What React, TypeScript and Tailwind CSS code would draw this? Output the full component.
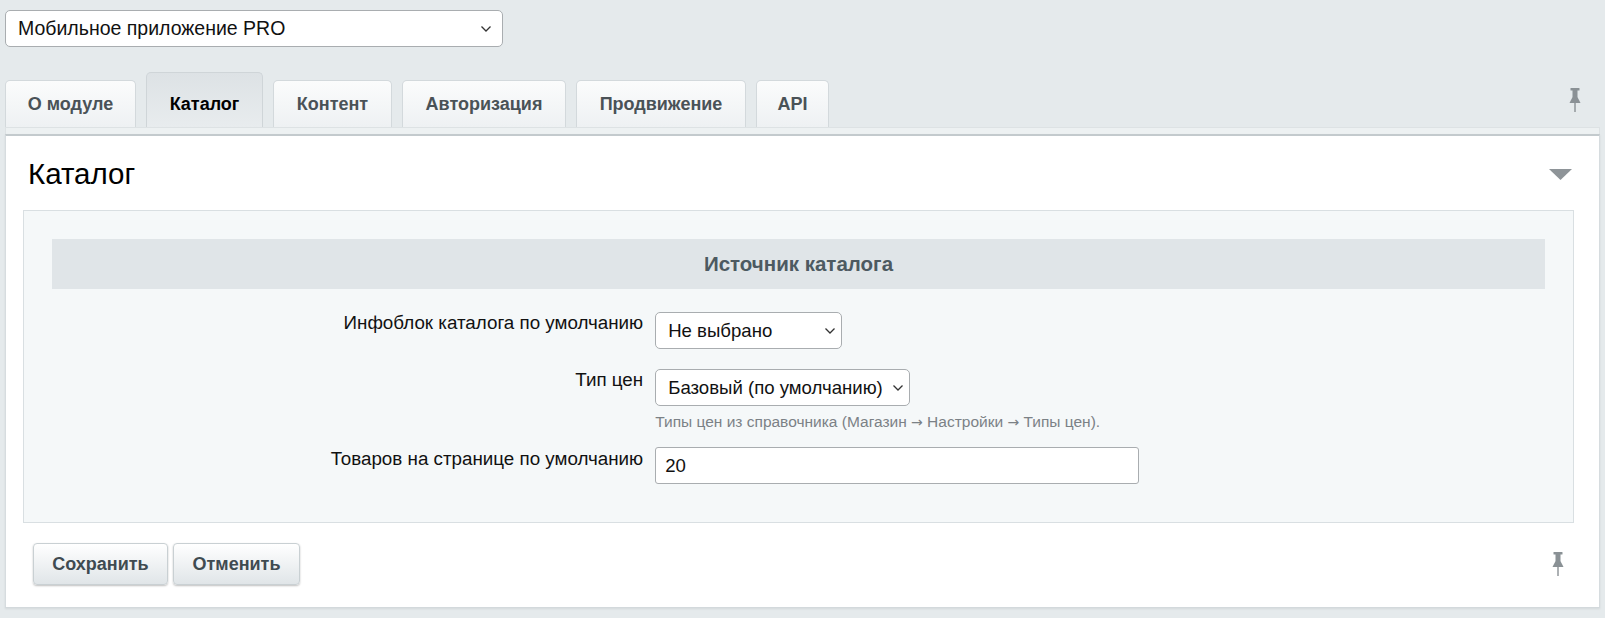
import React from 'react';

const tabs = [
    { label: 'О модуле', w: 'w-[131px]' },
    { label: 'Каталог', w: 'w-[117px]', active: true },
    { label: 'Контент', w: 'w-[119px]' },
    { label: 'Авторизация', w: 'w-[164px]' },
    { label: 'Продвижение', w: 'w-[170px]' },
    { label: 'API', w: 'w-[73px]' },
];

function Chevron({ pos }: { pos: string }) {
    return (
        <svg width="12" height="8" viewBox="0 0 12 8" className={`pointer-events-none absolute ${pos} top-1/2 -translate-y-1/2`}>
            <polyline points="1.5,1.5 6,6 10.5,1.5" fill="none" stroke="#333" strokeWidth="1.3" />
        </svg>
    );
}

function Pin() {
    return (
        <svg width="14" height="24" viewBox="0 0 14 24">
            <rect x="2.5" y="0" width="9" height="2.6" rx="0.6" fill="#8a9195" />
            <rect x="4.5" y="2" width="5" height="8" fill="#8a9195" />
            <polygon points="1.5,15 4.3,9.5 9.7,9.5 12.5,15" fill="#8a9195" />
            <rect x="6.3" y="14.5" width="1.4" height="9.5" fill="#8a9195" />
        </svg>
    );
}

function SelectBox({ value, w }: { value: string; w: string }) {
    return (
        <div className={`relative ${w} h-[37px] rounded-[5px] border border-[#a9adb0] bg-white flex items-center pl-[12px] text-[18.6px] text-[#111]`}>
            <span>{value}</span>
            <Chevron pos="right-[5px]" />
        </div>
    );
}

const Arrow = () => <span style={{ fontFamily: '"DejaVu Sans", sans-serif' }} className="text-[14px]">→</span>;

export default function App() {
    return (
        <div className="min-h-screen bg-[#e5eaec] px-[5px] pt-[10px] pb-[12px] text-[#000]" style={{ fontFamily: '"Liberation Sans", Arial, sans-serif' }}>
            {/* Module select */}
            <div className="relative w-[498px] h-[37px] rounded-[5px] border border-[#a9adb0] bg-white flex items-center pl-[12px] text-[19.5px] text-[#111]">
                <span>Мобильное приложение PRO</span>
                <Chevron pos="right-[10px]" />
            </div>

            {/* Tabs */}
            <div className="mt-[25px] flex items-end justify-between h-[55px]">
                <div className="flex items-end gap-[10px]">
                    {tabs.map((t) =>
                        t.active ? (
                            <div
                                key={t.label}
                                className={`${t.w} h-[55px] rounded-t-[5px] border border-b-0 border-[#cfd5d8] bg-gradient-to-b from-[#dde2e5] to-[#e8ecee] flex items-center justify-center pt-[8px] text-[18px] font-bold text-black`}
                            >
                                {t.label}
                            </div>
                        ) : (
                            <div
                                key={t.label}
                                className={`${t.w} h-[47px] rounded-t-[5px] border border-b-0 border-[#d3d9dc] bg-gradient-to-b from-[#fbfcfc] to-[#eef1f3] flex items-center justify-center text-[18px] font-bold text-[#4a5257]`}
                            >
                                {t.label}
                            </div>
                        )
                    )}
                </div>
                <div className="mr-[18px] mb-[15px]">
                    <Pin />
                </div>
            </div>

            {/* Panel */}
            <div className="h-[7px] bg-[#edf1f2] border-x border-t border-[#dde2e4]" />
            <div className="border-t-2 border-[#c3cacd] border-x border-b border-x-[#d6dcdf] border-b-[#d3d9dc] bg-white pl-[17px] pr-[25px] pb-[22px] shadow-[0_1px_2px_rgba(0,0,0,0.08)]">
                <div className="flex items-center justify-between pt-[21px] pb-[19px] pl-[5px]">
                    <h1 className="text-[29.5px] leading-[34px] font-normal">Каталог</h1>
                    <svg width="23" height="11" viewBox="0 0 23 11" className="mr-[2px]">
                        <polygon points="0,0 23,0 11.5,11" fill="#8e9498" />
                    </svg>
                </div>

                <div className="border border-[#d9dfe2] bg-[#f5f8f9] px-[28px] pt-[28px] pb-[38px]">
                    <div className="h-[50px] bg-[#e0e5e8] flex items-center justify-center text-[20.5px] font-bold text-[#4d5a61]">
                        Источник каталога
                    </div>

                    <div className="mt-[23px] flex flex-col gap-[20px]">
                        <div className="flex">
                            <div className="w-[40%] pr-[6px] text-right text-[18.8px] leading-[21px] text-[#111]">Инфоблок каталога по умолчанию</div>
                            <div className="pl-[6px]">
                                <SelectBox value="Не выбрано" w="w-[187px]" />
                            </div>
                        </div>
                        <div className="flex">
                            <div className="w-[40%] pr-[6px] text-right text-[18.8px] leading-[21px] text-[#111]">Тип цен</div>
                            <div className="pl-[6px]">
                                <SelectBox value="Базовый (по умолчанию)" w="w-[255px]" />
                                <div className="mt-[7px] text-[15.5px] leading-[18px] text-[#7b8186]">
                                    Типы цен из справочника (Магазин <Arrow /> Настройки <Arrow /> Типы цен).
                                </div>
                            </div>
                        </div>
                        <div className="flex -mt-[4px]">
                            <div className="w-[40%] pr-[6px] pt-[1px] text-right text-[18.8px] leading-[21px] text-[#111]">Товаров на странице по умолчанию</div>
                            <div className="pl-[6px]">
                                <div className="w-[484px] h-[37px] rounded-[3px] border border-[#a9adb0] bg-white flex items-center pl-[9px] text-[18.6px] text-[#111]">
                                    20
                                </div>
                            </div>
                        </div>
                    </div>
                </div>

                <div className="mt-[20px] flex items-center justify-between pl-[10px]">
                    <div className="flex gap-[5px]">
                        <button className="w-[135px] h-[42px] rounded-[4px] border border-[#c9d0d3] bg-gradient-to-b from-white to-[#e0e5e8] shadow-[0_1px_2px_rgba(0,0,0,0.25)] text-[18px] font-bold text-[#3f4b51]">
                            Сохранить
                        </button>
                        <button className="w-[127px] h-[42px] rounded-[4px] border border-[#c9d0d3] bg-gradient-to-b from-white to-[#e0e5e8] shadow-[0_1px_2px_rgba(0,0,0,0.25)] text-[18px] font-bold text-[#3f4b51]">
                            Отменить
                        </button>
                    </div>
                    <div className="mr-[9px]">
                        <Pin />
                    </div>
                </div>
            </div>
        </div>
    );
}
